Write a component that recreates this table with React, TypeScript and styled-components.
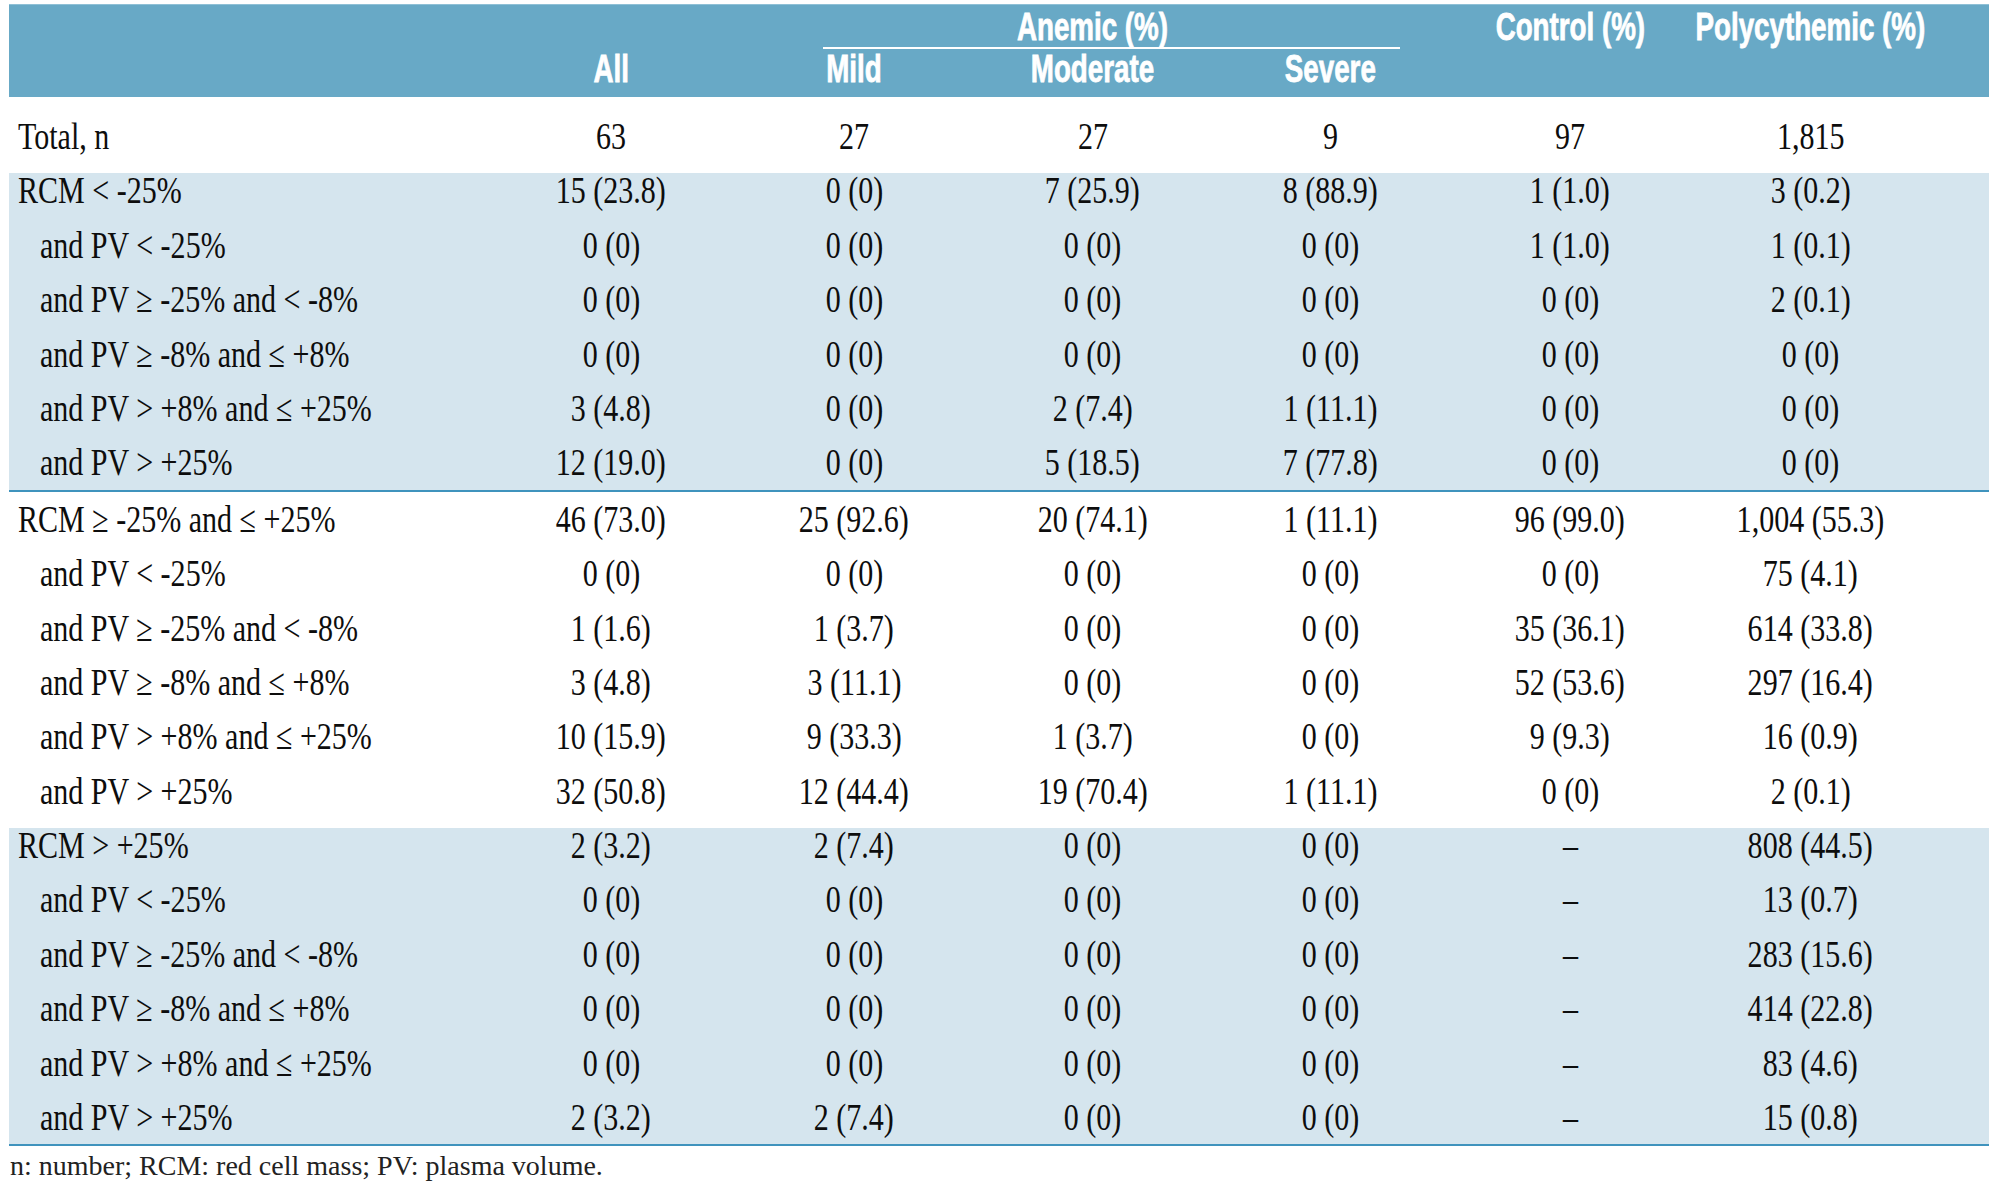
import React from 'react';
import styled, { createGlobalStyle } from 'styled-components';

const GlobalStyle = createGlobalStyle`
  html, body {
    margin: 0;
    padding: 0;
    background: #ffffff;
  }
`;

// column widths measured from the reference (label + 6 value columns + right gutter)
const COLS = '479px 246px 240px 237px 239px 240px 241px 1fr';

const Page = styled.div`
  padding: 4px 11px 0 9px;
  font-family: 'Liberation Serif', 'Times New Roman', serif;
  color: #0d0d0d;
`;

const Table = styled.div`
  width: 1980px;
`;

const Head = styled.div`
  display: grid;
  grid-template-columns: ${COLS};
  background: #68a9c6;
  border-top: 1px solid #8fc0d6;
  padding: 2px 0 8px;
  color: #ffffff;
  font-family: 'Liberation Sans', Arial, sans-serif;
  font-weight: 700;
  font-size: 38px;
  line-height: 40px;
  white-space: nowrap;
  -webkit-text-stroke: 0.8px #ffffff;
`;

const HeadCell = styled.div<{ $col: string; $row: number }>`
  grid-column: ${(p) => p.$col};
  grid-row: ${(p) => p.$row};
  display: flex;
  flex-direction: column;
  align-items: center;
  min-width: 0;
`;

const HeadText = styled.span`
  display: inline-block;
  transform: scaleX(0.73);
  transform-origin: center;
`;

const Rule = styled.div`
  align-self: stretch;
  height: 2px;
  background: #ffffff;
  margin: 0 50px 0 89px;
`;

const Group = styled.section<{ $band?: boolean; $rule?: boolean }>`
  background: ${(p) =>
    p.$band
      ? 'linear-gradient(#d5e5ee, #d5e5ee) no-repeat 0 10px / 100% calc(100% - 10px)'
      : 'transparent'};
  border-bottom: ${(p) => (p.$rule ? '2px solid #3f93bd' : 'none')};
`;

const Row = styled.div<{ $top?: number }>`
  display: grid;
  grid-template-columns: ${COLS};
  height: 54.4px;
  line-height: 54.4px;
  padding-top: ${(p) => p.$top ?? 0}px;
  font-size: 38px;
  white-space: nowrap;
`;

const Label = styled.div<{ $indent?: boolean }>`
  padding-left: ${(p) => (p.$indent ? 31 : 9)}px;
  text-align: left;
`;

const Value = styled.div`
  display: flex;
  justify-content: center;
  min-width: 0;
`;

const Txt = styled.span<{ $origin: 'left' | 'center' }>`
  display: inline-block;
  transform: scaleX(0.79);
  transform-origin: ${(p) => p.$origin};
`;

const Footer = styled.div`
  margin-top: 4px;
  padding-left: 1px;
  font-family: 'Liberation Serif', 'Times New Roman', serif;
  font-size: 28px;
  line-height: 32px;
  color: #222;
  white-space: nowrap;
`;

type RowData = { label: string; indent?: boolean; values: string[] };

const z = '0 (0)';
const dash = '–';

const groups: { band: boolean; rule: boolean; rows: RowData[] }[] = [
  {
    band: true,
    rule: true,
    rows: [
      { label: 'RCM < -25%', values: ['15 (23.8)', z, '7 (25.9)', '8 (88.9)', '1 (1.0)', '3 (0.2)'] },
      { label: 'and PV < -25%', indent: true, values: [z, z, z, z, '1 (1.0)', '1 (0.1)'] },
      { label: 'and PV ≥ -25% and < -8%', indent: true, values: [z, z, z, z, z, '2 (0.1)'] },
      { label: 'and PV ≥ -8% and ≤ +8%', indent: true, values: [z, z, z, z, z, z] },
      { label: 'and PV > +8% and ≤ +25%', indent: true, values: ['3 (4.8)', z, '2 (7.4)', '1 (11.1)', z, z] },
      { label: 'and PV > +25%', indent: true, values: ['12 (19.0)', z, '5 (18.5)', '7 (77.8)', z, z] },
    ],
  },
  {
    band: false,
    rule: false,
    rows: [
      { label: 'RCM ≥ -25% and ≤ +25%', values: ['46 (73.0)', '25 (92.6)', '20 (74.1)', '1 (11.1)', '96 (99.0)', '1,004 (55.3)'] },
      { label: 'and PV < -25%', indent: true, values: [z, z, z, z, z, '75 (4.1)'] },
      { label: 'and PV ≥ -25% and < -8%', indent: true, values: ['1 (1.6)', '1 (3.7)', z, z, '35 (36.1)', '614 (33.8)'] },
      { label: 'and PV ≥ -8% and ≤ +8%', indent: true, values: ['3 (4.8)', '3 (11.1)', z, z, '52 (53.6)', '297 (16.4)'] },
      { label: 'and PV > +8% and ≤ +25%', indent: true, values: ['10 (15.9)', '9 (33.3)', '1 (3.7)', z, '9 (9.3)', '16 (0.9)'] },
      { label: 'and PV > +25%', indent: true, values: ['32 (50.8)', '12 (44.4)', '19 (70.4)', '1 (11.1)', z, '2 (0.1)'] },
    ],
  },
  {
    band: true,
    rule: true,
    rows: [
      { label: 'RCM > +25%', values: ['2 (3.2)', '2 (7.4)', z, z, dash, '808 (44.5)'] },
      { label: 'and PV < -25%', indent: true, values: [z, z, z, z, dash, '13 (0.7)'] },
      { label: 'and PV ≥ -25% and < -8%', indent: true, values: [z, z, z, z, dash, '283 (15.6)'] },
      { label: 'and PV ≥ -8% and ≤ +8%', indent: true, values: [z, z, z, z, dash, '414 (22.8)'] },
      { label: 'and PV > +8% and ≤ +25%', indent: true, values: [z, z, z, z, dash, '83 (4.6)'] },
      { label: 'and PV > +25%', indent: true, values: ['2 (3.2)', '2 (7.4)', z, z, dash, '15 (0.8)'] },
    ],
  },
];

function DataRow({ row, top }: { row: RowData; top?: number }) {
  return (
    <Row $top={top}>
      <Label $indent={row.indent}>
        <Txt $origin="left">{row.label}</Txt>
      </Label>
      {row.values.map((v, i) => (
        <Value key={i}>
          <Txt $origin="center">{v}</Txt>
        </Value>
      ))}
    </Row>
  );
}

export default function App() {
  return (
    <>
      <GlobalStyle />
      <Page>
        <Table>
          <Head>
            <HeadCell $col="3 / 6" $row={1}>
              <HeadText>Anemic (%)</HeadText>
              <Rule />
            </HeadCell>
            <HeadCell $col="6" $row={1}>
              <HeadText>Control (%)</HeadText>
            </HeadCell>
            <HeadCell $col="7" $row={1}>
              <HeadText>Polycythemic (%)</HeadText>
            </HeadCell>
            <HeadCell $col="2" $row={2}>
              <HeadText>All</HeadText>
            </HeadCell>
            <HeadCell $col="3" $row={2}>
              <HeadText>Mild</HeadText>
            </HeadCell>
            <HeadCell $col="4" $row={2}>
              <HeadText>Moderate</HeadText>
            </HeadCell>
            <HeadCell $col="5" $row={2}>
              <HeadText>Severe</HeadText>
            </HeadCell>
          </Head>

          <DataRow top={12} row={{ label: 'Total, n', values: ['63', '27', '27', '9', '97', '1,815'] }} />

          {groups.map((g, gi) => (
            <Group key={gi} $band={g.band} $rule={g.rule}>
              {g.rows.map((r, ri) => (
                <DataRow key={ri} row={r} />
              ))}
            </Group>
          ))}
        </Table>
        <Footer>n: number; RCM: red cell mass; PV: plasma volume.</Footer>
      </Page>
    </>
  );
}
